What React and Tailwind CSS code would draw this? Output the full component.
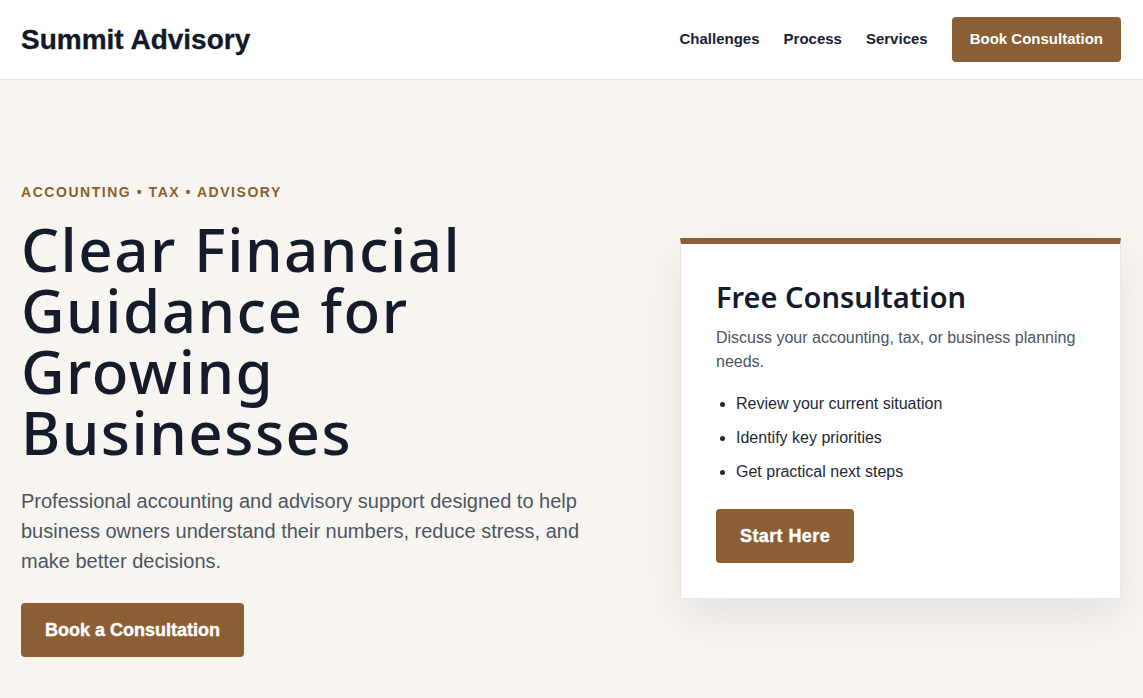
export default function App() {
  const sans = { fontFamily: '"Liberation Sans", Arial, sans-serif' };
  const head = { fontFamily: '"Noto Sans", sans-serif' };
  return (
    <div className="min-h-screen bg-[#f8f5f0]" style={sans}>
      <header className="bg-white border-b border-[#e8e5e0]">
        <div className="pl-[21px] pr-[22px] h-[79px] flex items-center justify-between">
          <div className="text-[28px] font-bold text-[#111827] [-webkit-text-stroke:0.3px_#111827]">Summit Advisory</div>
          <nav className="flex items-center gap-6 text-[15px] font-bold text-[#1a2233]">
            <a>Challenges</a>
            <a>Process</a>
            <a>Services</a>
            <a className="bg-[#8b5e34] text-white rounded-[4px] px-[18px] h-[45px] flex items-center">Book Consultation</a>
          </nav>
        </div>
      </header>
      <section className="pt-[102px] pb-[60px]">
        <div className="pl-[21px] pr-[22px] grid grid-cols-[579px_441px] gap-20 items-center">
          <div>
            <div className="text-[14px] leading-5 font-bold tracking-[0.11em] text-[#8b5e34]">ACCOUNTING • TAX • ADVISORY</div>
            <h1 className="mt-[17px] max-w-[480px] text-[60px] leading-[61px] font-medium tracking-[1.5px] text-[#141b2b]" style={head}>
              Clear Financial Guidance for Growing Businesses
            </h1>
            <p className="mt-[23px] text-[20px] leading-[30px] text-[#4b5563] max-w-[580px]">
              Professional accounting and advisory support designed to help business owners understand their numbers, reduce stress, and make better decisions.
            </p>
            <a className="mt-[27px] inline-flex items-center h-[54px] px-6 bg-[#8b5e34] text-white rounded-[4px] text-[18px] font-bold [-webkit-text-stroke:0.4px_white]">Book a Consultation</a>
          </div>
          <div className="-mt-[2px] bg-white border border-[#ebe8e3] border-t-[6px] border-t-[#8b5e34] px-[35px] pt-9 pb-[35px] shadow-[0_18px_40px_rgba(0,0,0,0.08)]">
            <h2 className="text-[29px] leading-[34px] font-semibold text-[#141b2b]" style={head}>Free Consultation</h2>
            <p className="mt-[12px] text-[16px] leading-6 text-[#4b5563]">Discuss your accounting, tax, or business planning needs.</p>
            <ul className="mt-[18px] list-disc pl-5 text-[16px] leading-6 text-[#1f2937] space-y-[10px]">
              <li>Review your current situation</li>
              <li>Identify key priorities</li>
              <li>Get practical next steps</li>
            </ul>
            <a className="mt-[25px] inline-flex items-center h-[54px] px-6 bg-[#8b5e34] text-white rounded-[4px] text-[18px] font-bold tracking-[0.4px] [-webkit-text-stroke:0.4px_white]">Start Here</a>
          </div>
        </div>
      </section>
    </div>
  );
}
